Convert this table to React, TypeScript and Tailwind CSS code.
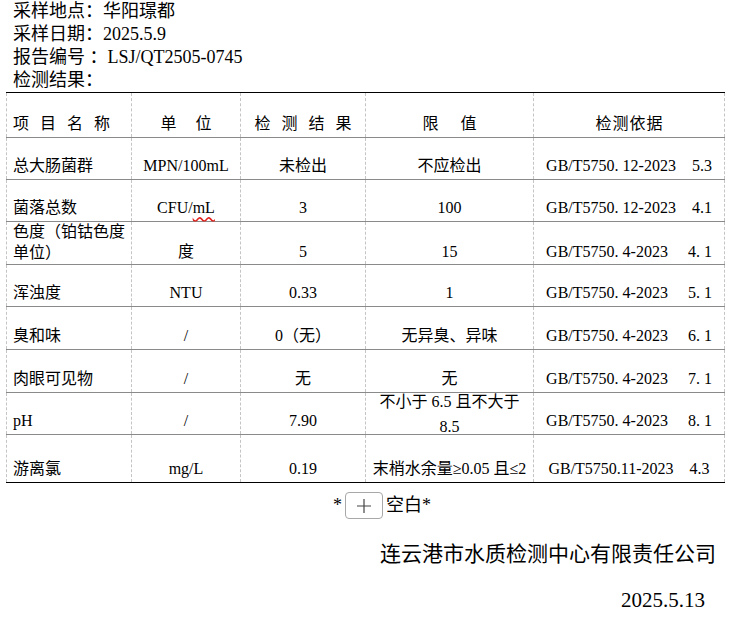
import React from 'react';

type Row = {
  name: React.ReactNode;
  unit: React.ReactNode;
  result: string;
  limit: React.ReactNode;
  basis: string;
  h: string;
  pb?: string;
  limitCls?: string;
  nameCls?: string;
};

const rows: Row[] = [
  { name: '总大肠菌群', unit: 'MPN/100mL', result: '未检出', limit: '不应检出', basis: 'GB/T5750. 12-2023    5.3', h: 'h-[42px]' },
  {
    name: '菌落总数',
    unit: (
      <>
        CFU/<span className="underline decoration-wavy decoration-[#e0201c] underline-offset-[3px]">mL</span>
      </>
    ),
    result: '3',
    limit: '100',
    basis: 'GB/T5750. 12-2023    4.1',
    h: 'h-[42px]',
  },
  {
    name: (
      <>
        色度（铂钴色度
        <br />
        单位）
      </>
    ),
    nameCls: 'leading-[21px]',
    unit: '度',
    result: '5',
    limit: '15',
    basis: 'GB/T5750. 4-2023     4. 1',
    h: 'h-[43px]',
    pb: 'pb-[1px]',
  },
  { name: '浑浊度', unit: 'NTU', result: '0.33', limit: '1', basis: 'GB/T5750. 4-2023     5. 1', h: 'h-[42px]' },
  { name: '臭和味', unit: '/', result: '0（无）', limit: '无异臭、异味', basis: 'GB/T5750. 4-2023     6. 1', h: 'h-[43px]' },
  { name: '肉眼可见物', unit: '/', result: '无', limit: '无', basis: 'GB/T5750. 4-2023     7. 1', h: 'h-[43px]' },
  {
    name: 'pH',
    unit: '/',
    result: '7.90',
    limit: (
      <>
        不小于 6.5 且不大于
        <br />
        8.5
      </>
    ),
    limitCls: 'leading-[25px] -mb-[7px]',
    basis: 'GB/T5750. 4-2023     8. 1',
    h: 'h-[42px]',
  },
  { name: '游离氯', unit: 'mg/L', result: '0.19', limit: '末梢水余量≥0.05 且≤2', basis: 'GB/T5750.11-2023    4.3', h: 'h-[48px]' },
];

const cell = 'flex items-end border-r border-dashed border-[#c4c4c4] whitespace-pre';

const Spread = ({ text, gap }: { text: string; gap: string }) => (
  <span className={`flex ${gap}`}>
    {text.split('').map((c, i) => (
      <span key={i}>{c}</span>
    ))}
  </span>
);

export default function App() {
  return (
    <div className="w-[731px] h-[637px] bg-white text-black font-['Liberation_Serif','Noto_Sans_CJK_SC',serif]">
      <div className="pl-[13px] text-[18px] leading-[23px]">
        <div>采样地点：华阳璟都</div>
        <div>采样日期：2025.5.9</div>
        <div className="whitespace-pre">报告编号 ：LSJ/QT2505-0745</div>
        <div>检测结果：</div>
      </div>

      <div className="ml-[6px] w-[719px] border-t border-black text-[16px] leading-[22px]">
        <div className="flex h-[45px] border-b border-[#8a8a8a]">
          <div className={`${cell} border-l w-[126px] pl-[6px] pb-[2px]`}>
            <Spread text="项目名称" gap="gap-[11px]" />
          </div>
          <div className={`${cell} w-[109px] justify-center pb-[2px]`}>
            <Spread text="单位" gap="gap-[19px]" />
          </div>
          <div className={`${cell} w-[125px] justify-center pb-[2px]`}>
            <Spread text="检测结果" gap="gap-[11px]" />
          </div>
          <div className={`${cell} w-[168px] justify-center pb-[2px]`}>
            <Spread text="限值" gap="gap-[22px]" />
          </div>
          <div className={`${cell} w-[191px] justify-center pb-[2px]`}>
            <Spread text="检测依据" gap="gap-[1px]" />
          </div>
        </div>

        {rows.map((r, i) => {
          const pb = r.pb ?? 'pb-[2px]';
          const last = i === rows.length - 1;
          return (
            <div key={i} className={`flex ${r.h} border-b ${last ? 'border-black' : 'border-[#8a8a8a]'}`}>
              <div className={`${cell} border-l w-[126px] pl-[6px] ${pb}`}>
                <div className={r.nameCls}>{r.name}</div>
              </div>
              <div className={`${cell} w-[109px] justify-center ${pb}`}>
                <div>{r.unit}</div>
              </div>
              <div className={`${cell} w-[125px] justify-center ${pb}`}>
                <div>{r.result}</div>
              </div>
              <div className={`${cell} w-[168px] justify-center ${pb}`}>
                <div className={`text-center ${r.limitCls ?? ''}`}>{r.limit}</div>
              </div>
              <div className={`${cell} w-[191px] justify-center ${pb}`}>
                <div>{r.basis}</div>
              </div>
            </div>
          );
        })}
      </div>

      <div className="mt-[9px] flex h-[27px] items-center pl-[333px] text-[18px]">
        <span>*</span>
        <span className="mx-[3px] flex h-[27px] w-[38px] items-center justify-center rounded-[4px] border border-[#a8a8a8]">
          <svg width="16" height="16" viewBox="0 0 16 16" fill="none" stroke="#444" strokeWidth="1.2">
            <path d="M8 1v14M1 8h14" />
          </svg>
        </span>
        <span>空白*</span>
      </div>

      <div className="mt-[19px] pr-[15px] text-right text-[21px] leading-[28px] font-['Noto_Sans_CJK_SC',sans-serif]">
        连云港市水质检测中心有限责任公司
      </div>
      <div className="mt-[20px] pr-[26px] text-right text-[21px] leading-[28px]">2025.5.13</div>
    </div>
  );
}
